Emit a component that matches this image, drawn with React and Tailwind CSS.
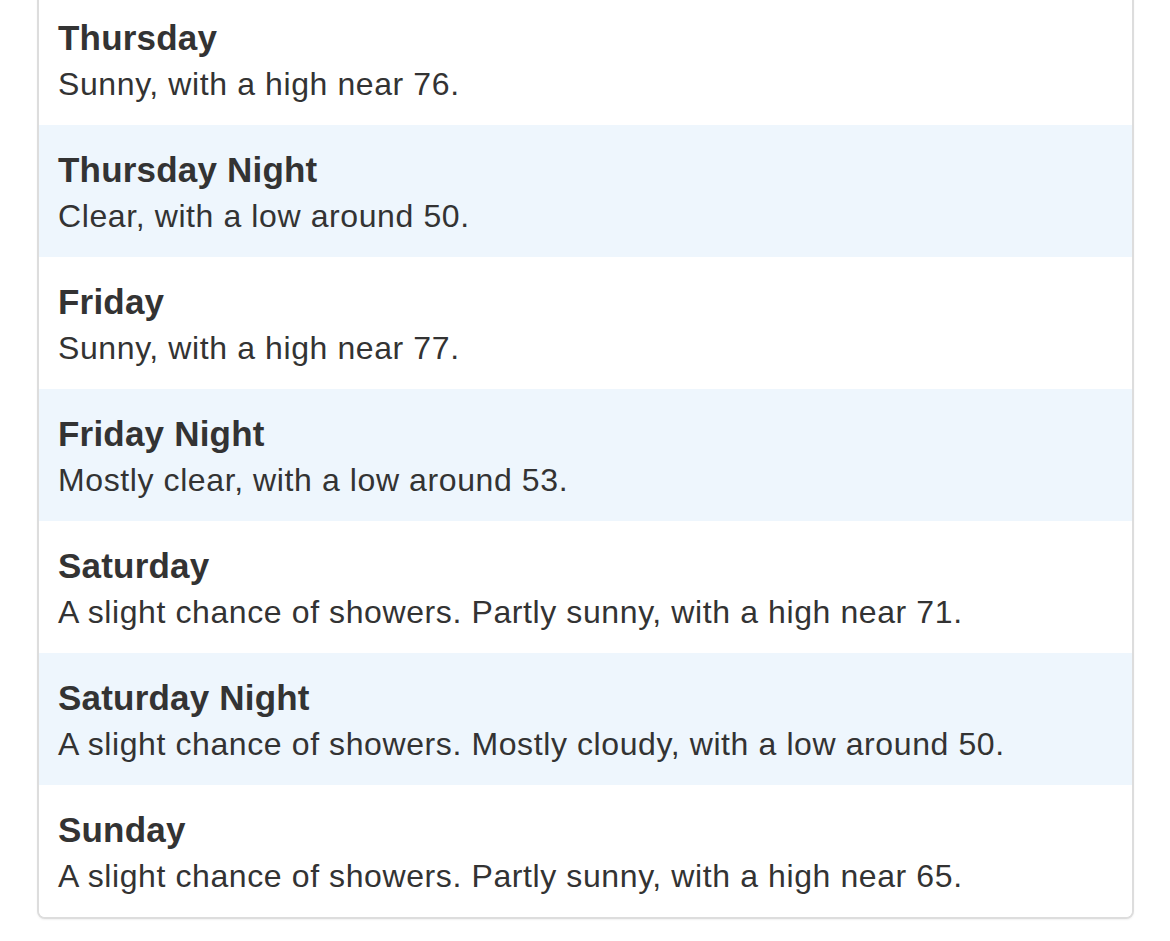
const periods = [
  { name: "Thursday", text: "Sunny, with a high near 76." },
  { name: "Thursday Night", text: "Clear, with a low around 50." },
  { name: "Friday", text: "Sunny, with a high near 77." },
  { name: "Friday Night", text: "Mostly clear, with a low around 53." },
  { name: "Saturday", text: "A slight chance of showers. Partly sunny, with a high near 71." },
  { name: "Saturday Night", text: "A slight chance of showers. Mostly cloudy, with a low around 50." },
  { name: "Sunday", text: "A slight chance of showers. Partly sunny, with a high near 65." },
];

export default function App() {
  return (
    <div
      className="min-h-screen bg-white text-[#333333]"
      style={{ fontFamily: '"Liberation Sans", Arial, Helvetica, sans-serif' }}
    >
      <div className="-mt-[9px] ml-[37px] w-[1097px] rounded-lg border-2 border-[#dddddd] bg-white shadow-[0_1px_2px_rgba(0,0,0,0.06)] overflow-hidden">
        {periods.map((p, i) => (
          <div
            key={p.name}
            className={
              "h-[132px] px-[19px] pt-[26px] " + (i % 2 === 1 ? "bg-[#eef6fd]" : "bg-white")
            }
          >
            <div className="text-[35px] leading-[38px] font-bold tracking-[0.2px]">{p.name}</div>
            <div className="text-[32px] leading-[54px] tracking-[0.6px]">{p.text}</div>
          </div>
        ))}
      </div>
    </div>
  );
}
